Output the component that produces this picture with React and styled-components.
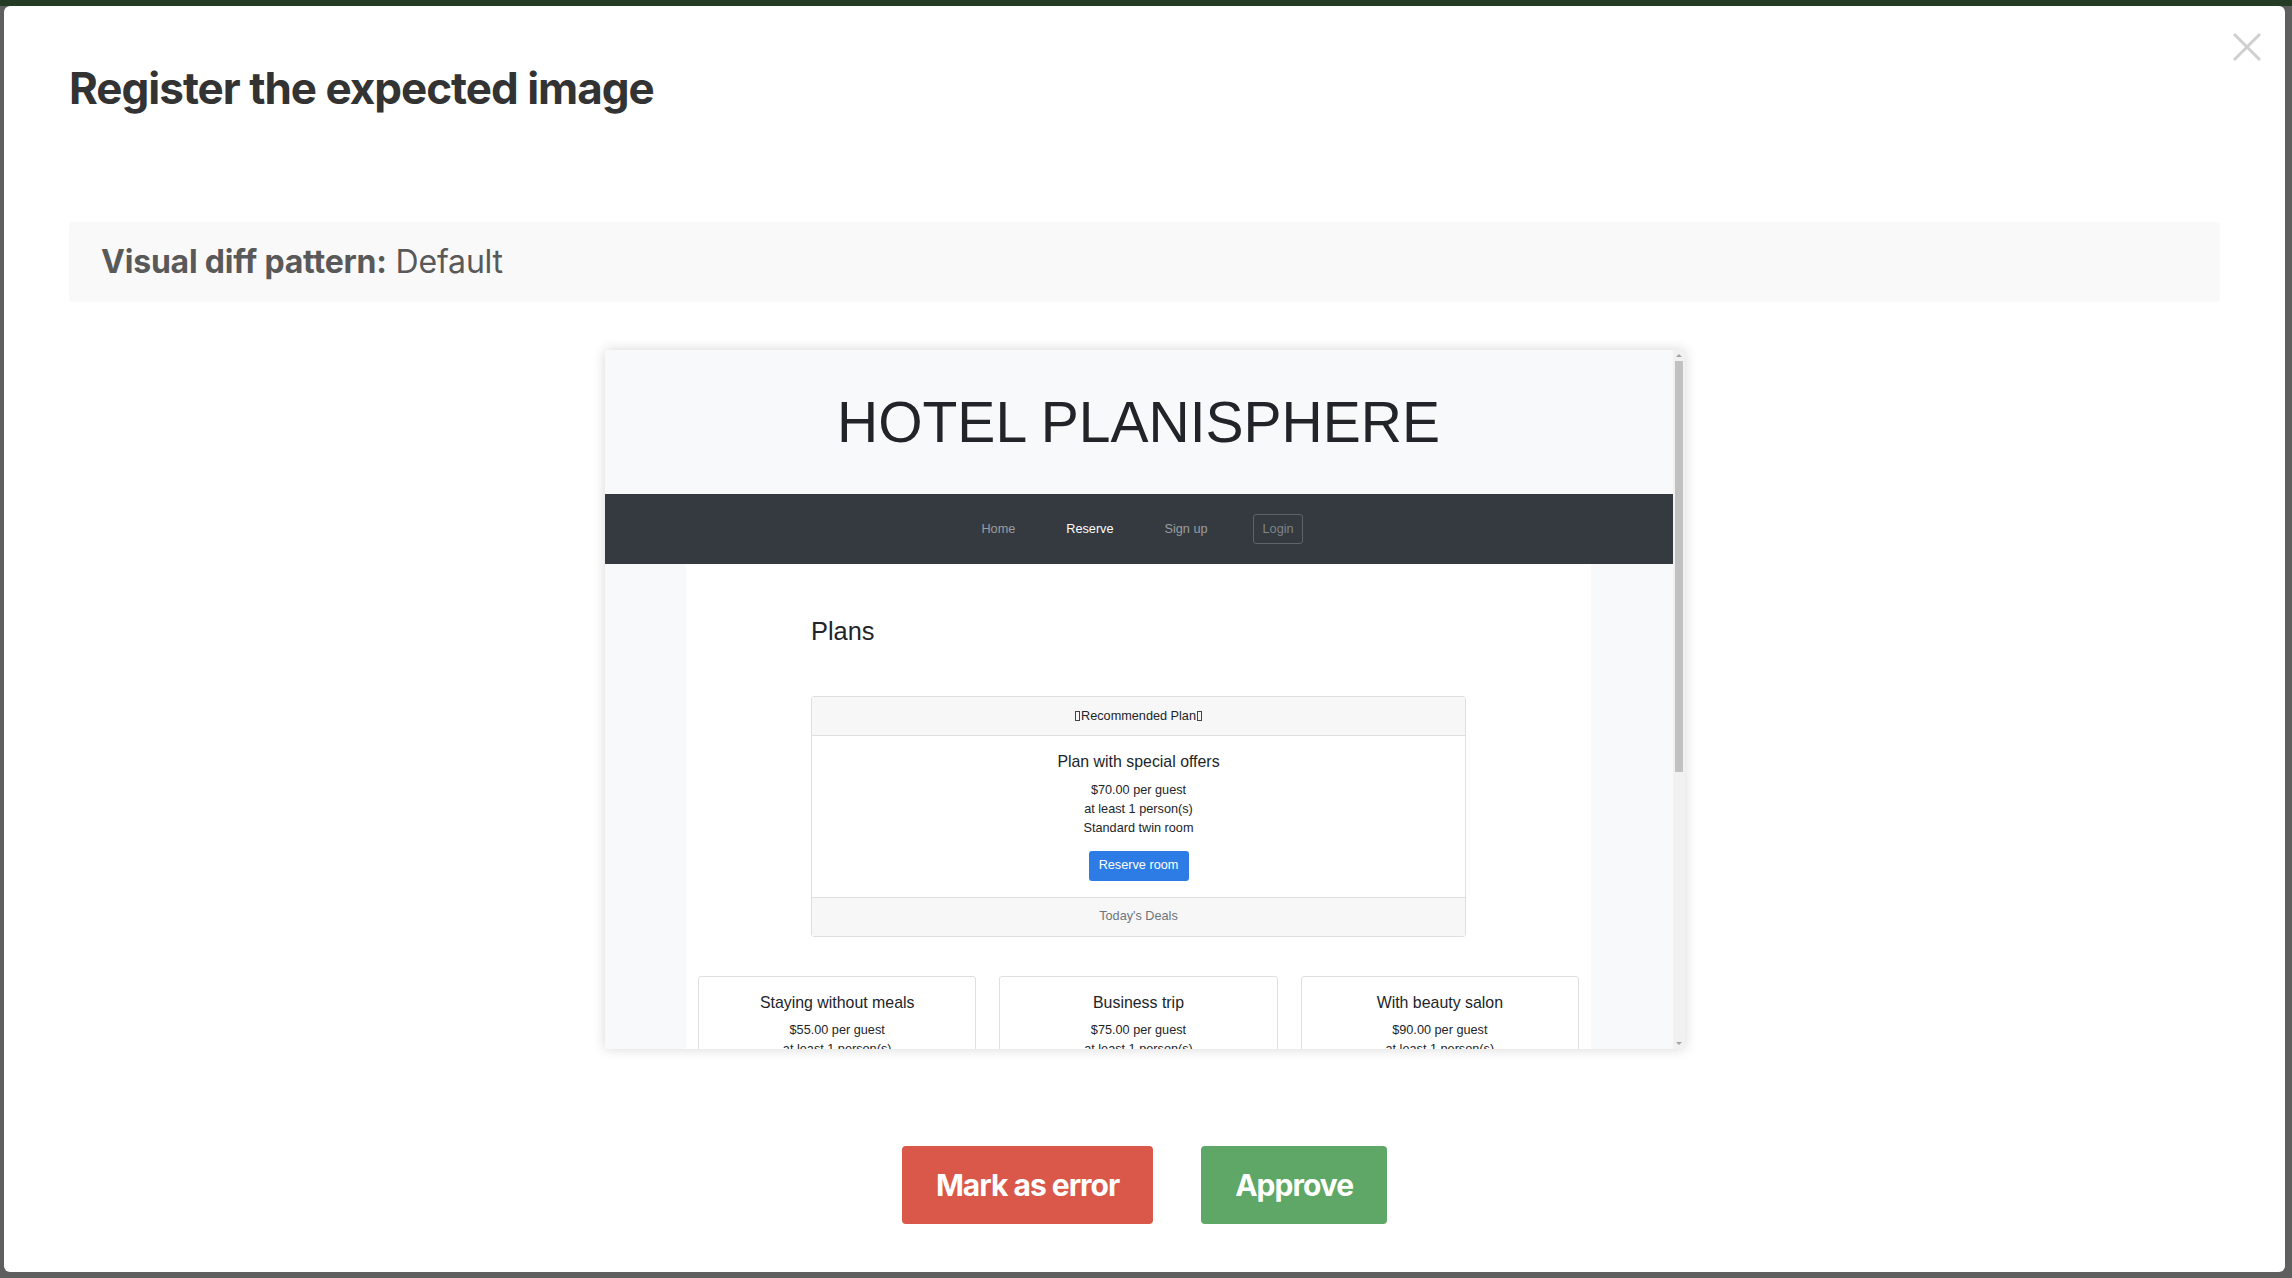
import React from 'react';
import styled, { createGlobalStyle } from 'styled-components';

const GlobalStyle = createGlobalStyle`
  html, body {
    margin: 0;
    padding: 0;
  }
  body {
    background: #5f5f5f;
    font-family: Inter, "Noto Sans", sans-serif;
  }
  * {
    box-sizing: border-box;
  }
`;

// Backdrop and modal shell
const Backdrop = styled.div`
  min-height: 100vh;
  padding: 6px 7px 6px 4px;
  background: linear-gradient(#243c24 0 6px, #5f5f5f 6px);
`;

const Modal = styled.div`
  position: relative;
  height: 1266px;
  background: #fff;
  border-radius: 6px;
  padding: 56px 65px 48px;
  display: flex;
  flex-direction: column;
`;

const CloseButton = styled.button`
  position: absolute;
  top: 25px;
  right: 22px;
  width: 32px;
  height: 32px;
  padding: 0;
  border: none;
  background: none;
  cursor: pointer;
  display: flex;
  align-items: center;
  justify-content: center;
`;

const Title = styled.h1`
  margin: 0;
  font-family: Inter, sans-serif;
  font-size: 44px;
  line-height: 52px;
  font-weight: 700;
  color: #333;
  letter-spacing: -1px;
`;

const PatternBox = styled.div`
  margin-top: 108px;
  background: #f9f9f9;
  border-radius: 4px;
  padding: 21px 32px;
  font-family: Inter, sans-serif;
  font-size: 32px;
  line-height: 38px;
  color: #595959;
  letter-spacing: -0.2px;

  strong {
    font-weight: 700;
  }
`;

const ButtonRow = styled.div`
  margin-top: 97px;
  display: flex;
  justify-content: center;
  gap: 48px;
`;

const ActionButton = styled.button`
  height: 78px;
  padding: 0 34px;
  border: none;
  border-radius: 4px;
  background: ${(p) => (p.$variant === 'danger' ? '#d9584a' : '#5ea766')};
  color: #fff;
  font-family: Inter, sans-serif;
  font-size: 30px;
  font-weight: 700;
  letter-spacing: -1px;
  cursor: pointer;
`;

// Screenshot of the hotel page
const ShotFrame = styled.div`
  align-self: center;
  margin-top: 48px;
  width: 1080px;
  height: 699px;
  display: flex;
  box-shadow: 0 0 12px rgba(0, 0, 0, 0.16);
  overflow: hidden;
`;

const ShotViewport = styled.div`
  flex: 1;
  overflow: hidden;
  background: #f8f9fa;
  font-family: "Liberation Sans", Arial, sans-serif;
  color: #212529;
  display: flex;
  flex-direction: column;
`;

const Masthead = styled.header`
  flex: none;
  height: 144px;
  display: flex;
  align-items: center;
  justify-content: center;
  background: #f8f9fa;
`;

const SiteTitle = styled.div`
  font-size: 57px;
  line-height: 1.2;
  font-weight: 400;
  color: #212529;
`;

const NavBar = styled.nav`
  flex: none;
  height: 70px;
  padding-right: 18px;
  background: #343a40;
  display: flex;
  align-items: center;
  justify-content: center;
  font-size: 12.7px;
`;

const NavLink = styled.span`
  padding: 0 25.5px;
  color: ${(p) => (p.$active ? '#fff' : 'rgba(255, 255, 255, 0.5)')};
`;

const LoginLink = styled.span`
  margin-left: 20px;
  height: 30px;
  width: 50px;
  display: flex;
  align-items: center;
  justify-content: center;
  border: 1px solid #5d6368;
  border-radius: 3px;
  color: #7f8489;
`;

const Main = styled.main`
  flex: 1;
  display: flex;
  justify-content: center;
`;

const Container = styled.div`
  width: 905px;
  background: #fff;
  padding: 0 12px;
`;

const PlansColumn = styled.div`
  width: 655px;
  margin: 0 auto;
`;

const PlansHeading = styled.h2`
  margin: 52px 0 0;
  font-size: 25.4px;
  line-height: 1.2;
  font-weight: 400;
`;

const Card = styled.div`
  margin-top: ${(p) => p.$top || 0}px;
  background: #fff;
  border: 1px solid #dfdfdf;
  border-radius: 3px;
  text-align: center;
  font-size: 12.7px;
  line-height: 19px;
`;

const CardHeader = styled.div`
  padding: 9.5px;
  background: #f7f7f7;
  border-bottom: 1px solid #dfdfdf;
  display: flex;
  align-items: center;
  justify-content: center;
`;

const Tofu = styled.span`
  display: inline-block;
  width: 5px;
  height: 10px;
  margin: 0 1px;
  border: 1px solid #444;
`;

const CardBody = styled.div`
  padding: 16px;
`;

const CardTitle = styled.div`
  font-size: 15.9px;
  line-height: 19px;
  margin-bottom: 9.5px;
`;

const CardText = styled.div`
  margin-bottom: 12.7px;
`;

const ReserveButton = styled.span`
  display: inline-flex;
  align-items: center;
  justify-content: center;
  width: 100px;
  height: 30px;
  border-radius: 3px;
  background: #2d7ce6;
  color: #fff;
`;

const CardFooter = styled.div`
  padding: 9.5px;
  background: #f7f7f7;
  border-top: 1px solid #dfdfdf;
  color: #6c757d;
`;

const CardGrid = styled.div`
  margin-top: 39px;
  display: grid;
  grid-template-columns: repeat(3, 1fr);
  gap: 23px;
`;

const Scrollbar = styled.div`
  flex: none;
  width: 12px;
  background: #f1f1f1;
  display: flex;
  flex-direction: column;
`;

const ScrollArrow = styled.div`
  flex: none;
  height: 11px;
  display: flex;
  align-items: center;
  justify-content: center;

  &::before {
    content: '';
    border-left: 3px solid transparent;
    border-right: 3px solid transparent;
    ${(p) =>
      p.$down ? 'border-top: 3px solid #a3a3a3;' : 'border-bottom: 3px solid #a3a3a3;'}
  }
`;

const ScrollThumb = styled.div`
  flex: none;
  height: 411px;
  margin: 0 2px;
  background: #c1c1c1;
`;

const ScrollSpacer = styled.div`
  flex: 1;
`;

const plans = [
  { title: 'Staying without meals', price: '$55.00', room: 'Single room' },
  { title: 'Business trip', price: '$75.00', room: 'Single room' },
  { title: 'With beauty salon', price: '$90.00', room: 'Premium twin room' },
];

const PlanCard = ({ plan }) => (
  <Card>
    <CardBody>
      <CardTitle>{plan.title}</CardTitle>
      <CardText>
        {plan.price} per guest
        <br />
        at least 1 person(s)
        <br />
        {plan.room}
      </CardText>
      <ReserveButton>Reserve room</ReserveButton>
    </CardBody>
  </Card>
);

const HotelShot = () => (
  <ShotFrame>
    <ShotViewport>
      <Masthead>
        <SiteTitle>HOTEL PLANISPHERE</SiteTitle>
      </Masthead>
      <NavBar>
        <NavLink>Home</NavLink>
        <NavLink $active>Reserve</NavLink>
        <NavLink>Sign up</NavLink>
        <LoginLink>Login</LoginLink>
      </NavBar>
      <Main>
        <Container>
          <PlansColumn>
            <PlansHeading>Plans</PlansHeading>
            <Card $top={50}>
              <CardHeader>
                <Tofu />
                Recommended Plan
                <Tofu />
              </CardHeader>
              <CardBody>
                <CardTitle>Plan with special offers</CardTitle>
                <CardText>
                  $70.00 per guest
                  <br />
                  at least 1 person(s)
                  <br />
                  Standard twin room
                </CardText>
                <ReserveButton>Reserve room</ReserveButton>
              </CardBody>
              <CardFooter>Today's Deals</CardFooter>
            </Card>
          </PlansColumn>
          <CardGrid>
            {plans.map((plan) => (
              <PlanCard key={plan.title} plan={plan} />
            ))}
          </CardGrid>
        </Container>
      </Main>
    </ShotViewport>
    <Scrollbar>
      <ScrollArrow />
      <ScrollThumb />
      <ScrollSpacer />
      <ScrollArrow $down />
    </Scrollbar>
  </ShotFrame>
);

const App = () => {
  return (
    <>
      <GlobalStyle />
      <Backdrop>
        <Modal>
          <CloseButton aria-label="Close">
            <svg width="30" height="30" viewBox="0 0 30 30">
              <path d="M2 2 L28 28 M28 2 L2 28" stroke="#cfcfcf" strokeWidth="3" />
            </svg>
          </CloseButton>
          <Title>Register the expected image</Title>
          <PatternBox>
            <strong>Visual diff pattern:</strong> Default
          </PatternBox>
          <HotelShot />
          <ButtonRow>
            <ActionButton $variant="danger">Mark as error</ActionButton>
            <ActionButton $variant="success">Approve</ActionButton>
          </ButtonRow>
        </Modal>
      </Backdrop>
    </>
  );
};

export default App;
